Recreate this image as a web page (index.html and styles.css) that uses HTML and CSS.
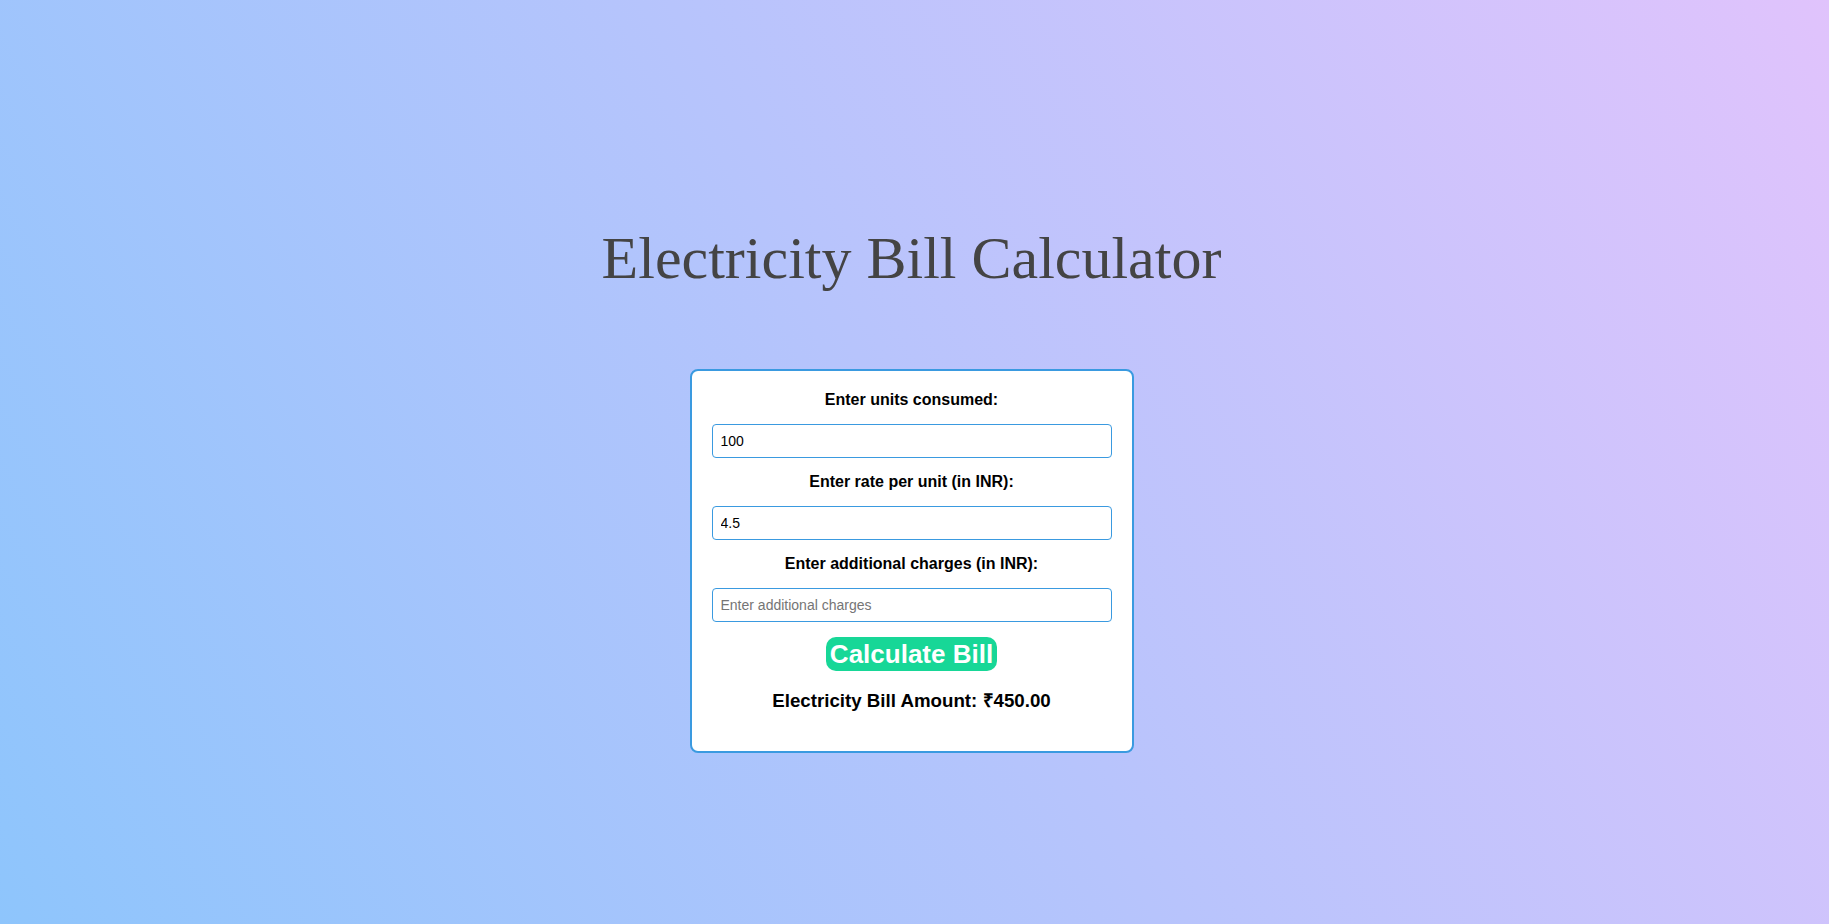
FILE: index.html
```html
<!DOCTYPE html>
<html lang="en">
<head>
<meta charset="UTF-8">
<title>Electricity Bill Calculator</title>
<link rel="stylesheet" href="styles.css">
</head>
<body>
<main class="page">
  <h1 class="title">Electricity Bill Calculator</h1>
  <section class="card">
    <label class="field-label" for="units">Enter units consumed:</label>
    <input class="field-input" id="units" type="text" value="100">
    <label class="field-label" for="rate">Enter rate per unit (in INR):</label>
    <input class="field-input" id="rate" type="text" value="4.5">
    <label class="field-label" for="extra">Enter additional charges (in INR):</label>
    <input class="field-input" id="extra" type="text" placeholder="Enter additional charges">
    <div class="actions">
      <button class="calc-btn" type="button">Calculate Bill</button>
    </div>
    <h3 class="result">Electricity Bill Amount: ₹450.00</h3>
  </section>
</main>
</body>
</html>
```
FILE: styles.css
```css
html, body {
  margin: 0;
  padding: 0;
}

body {
  min-height: 100vh;
  background-image: linear-gradient(62deg, #8ec5fc 0%, #e0c3fc 100%);
  font-family: "Liberation Sans", Arial, sans-serif;
}

.page {
  display: flex;
  flex-direction: column;
  align-items: center;
  padding: 224px 6px 0 0;
}

.title {
  margin: 0 0 76px 0;
  font-family: "Liberation Serif", "Times New Roman", serif;
  font-weight: normal;
  font-size: 60px;
  line-height: 69px;
  color: #444444;
}

.card {
  width: 400px;
  padding: 20px;
  background: #ffffff;
  border: 2px solid #3a9ae0;
  border-radius: 8px;
  text-align: center;
}

.field-label {
  display: block;
  font-weight: bold;
  font-size: 16px;
  color: #000;
}

.field-input {
  display: block;
  box-sizing: border-box;
  width: 100%;
  height: 34px;
  margin: 15px 0;
  padding: 0 8px;
  font-family: "Liberation Sans", Arial, sans-serif;
  font-size: 14px;
  color: #000;
  background: #fff;
  border: 1px solid #3a9ae0;
  border-radius: 4px;
  outline: none;
}

.field-input::placeholder {
  color: #757575;
}

.actions {
  display: flex;
  justify-content: center;
}

.calc-btn {
  padding: 2px 4px;
  font-family: "Liberation Sans", Arial, sans-serif;
  font-weight: bold;
  font-size: 26px;
  line-height: 30px;
  color: #ffffff;
  background: #17d797;
  border: none;
  border-radius: 10px;
  cursor: pointer;
}

.result {
  margin: 16px 0 18.72px;
  font-size: 18.72px;
  font-weight: bold;
  color: #000;
}
```
